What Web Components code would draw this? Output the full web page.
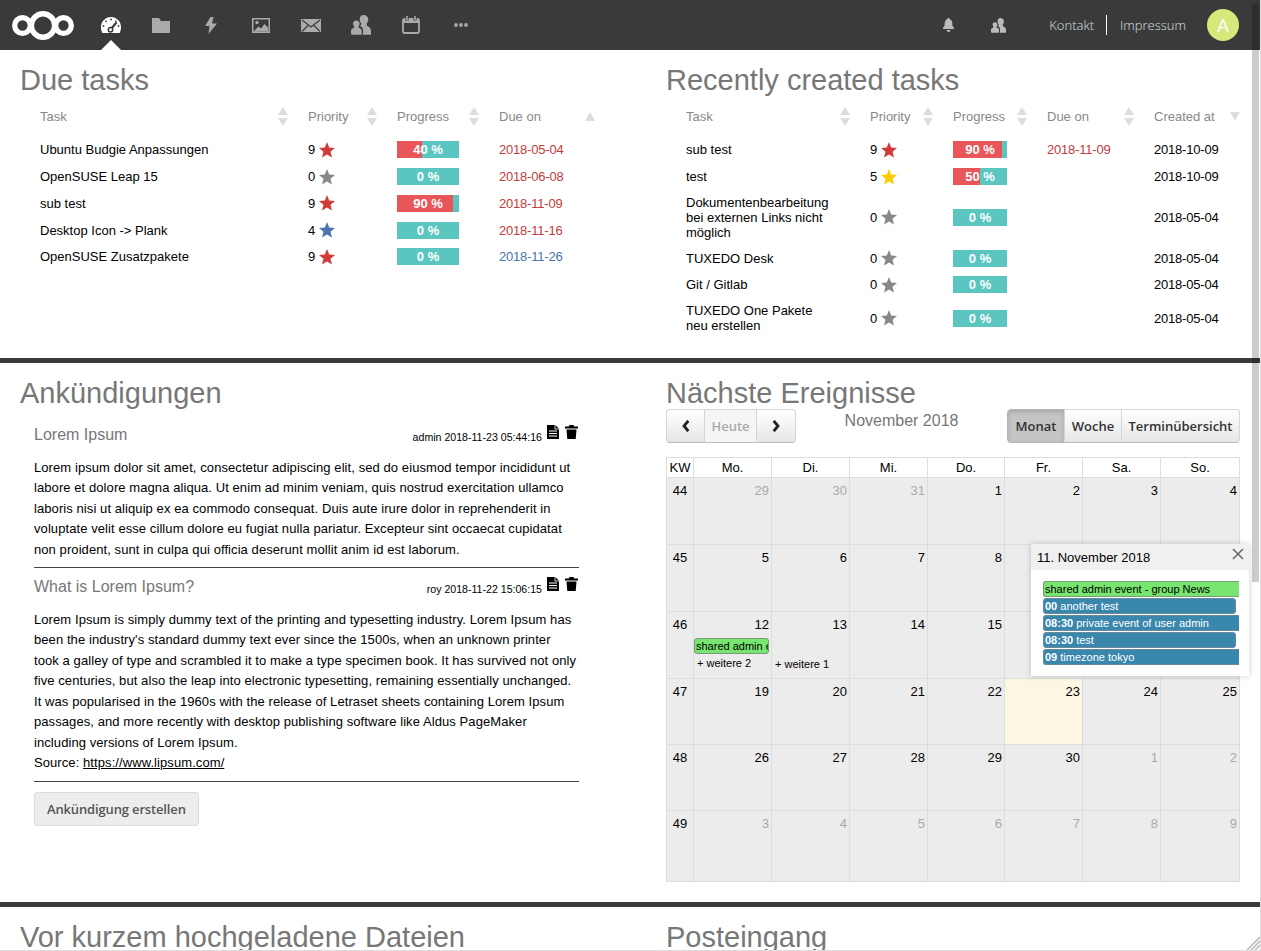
<!DOCTYPE html>
<html lang="de">
<head>
<meta charset="utf-8">
<title>Dashboard</title>
<style>
  html, body { margin: 0; height: 100%; overflow: hidden; background: #fff; }
  body { font: 13px/15px "Liberation Sans", Arial, sans-serif; color: #000; }
</style>
</head>
<body>
<app-shell>
  <nc-header></nc-header>

  <dash-row style="height:308px">
    <dash-panel heading="Due tasks">
      <task-table cols="288px 89px 102px 116px" sort="both,both,both,up" labels="Task,Priority,Progress,Due on">
        <task-row title-text="Ubuntu Budgie Anpassungen" prio="9" star="#d33a3a" done="40" due="2018-05-04" due-color="#c23b3b"></task-row>
        <task-row title-text="OpenSUSE Leap 15" prio="0" star="#888" done="0" due="2018-06-08" due-color="#c23b3b"></task-row>
        <task-row title-text="sub test" prio="9" star="#d33a3a" done="90" due="2018-11-09" due-color="#c23b3b"></task-row>
        <task-row title-text="Desktop Icon -&gt; Plank" prio="4" star="#4a76ad" done="0" due="2018-11-16" due-color="#c23b3b"></task-row>
        <task-row title-text="OpenSUSE Zusatzpakete" prio="9" star="#d33a3a" done="0" due="2018-11-26" due-color="#4a76ad"></task-row>
      </task-table>
    </dash-panel>
    <dash-panel heading="Recently created tasks">
      <task-table cols="204px 83px 94px 107px 106px" sort="both,both,both,both,down" labels="Task,Priority,Progress,Due on,Created at">
        <task-row title-text="sub test" prio="9" star="#d33a3a" done="90" due="2018-11-09" due-color="#c23b3b" created="2018-10-09"></task-row>
        <task-row title-text="test" prio="5" star="#fc0" done="50" due="" created="2018-10-09"></task-row>
        <task-row title-text="Dokumentenbearbeitung bei externen Links nicht möglich" prio="0" star="#888" done="0" due="" created="2018-05-04"></task-row>
        <task-row title-text="TUXEDO Desk" prio="0" star="#888" done="0" due="" created="2018-05-04"></task-row>
        <task-row title-text="Git / Gitlab" prio="0" star="#888" done="0" due="" created="2018-05-04"></task-row>
        <task-row title-text="TUXEDO One Pakete neu erstellen" prio="0" star="#888" done="0" due="" created="2018-05-04"></task-row>
      </task-table>
    </dash-panel>
  </dash-row>

  <dash-row style="height:539px">
    <dash-panel heading="Ankündigungen">
      <announce-list>
        <announce-item subject="Lorem Ipsum" meta="admin 2018-11-23 05:44:16">
          Lorem ipsum dolor sit amet, consectetur adipiscing elit, sed do eiusmod tempor incididunt ut labore et dolore magna aliqua. Ut enim ad minim veniam, quis nostrud exercitation ullamco laboris nisi ut aliquip ex ea commodo consequat. Duis aute irure dolor in reprehenderit in voluptate velit esse cillum dolore eu fugiat nulla pariatur. Excepteur sint occaecat cupidatat non proident, sunt in culpa qui officia deserunt mollit anim id est laborum.
        </announce-item>
        <announce-item subject="What is Lorem Ipsum?" meta="roy 2018-11-22 15:06:15">
          Lorem Ipsum is simply dummy text of the printing and typesetting industry. Lorem Ipsum has been the industry's standard dummy text ever since the 1500s, when an unknown printer took a galley of type and scrambled it to make a type specimen book. It has survived not only five centuries, but also the leap into electronic typesetting, remaining essentially unchanged. It was popularised in the 1960s with the release of Letraset sheets containing Lorem Ipsum passages, and more recently with desktop publishing software like Aldus PageMaker including versions of Lorem Ipsum.<br>
          Source: <a href="#" style="color:#000">https://www.lipsum.com/</a>
        </announce-item>
        <nc-button>Ankündigung erstellen</nc-button>
      </announce-list>
    </dash-panel>
    <dash-panel heading="Nächste Ereignisse">
      <month-calendar></month-calendar>
    </dash-panel>
  </dash-row>

  <dash-row style="height:44px" last>
    <dash-panel heading="Vor kurzem hochgeladene Dateien"></dash-panel>
    <dash-panel heading="Posteingang"></dash-panel>
  </dash-row>
</app-shell>

<script>
class AppShell extends HTMLElement {
  constructor() {
    super();
    this.attachShadow({ mode: 'open' });
    this.shadowRoot.innerHTML = `
      <style>
        :host { display: block; position: relative; width: 1261px; height: 951px; overflow: hidden;
          box-sizing: border-box; border-right: 1px solid #ddd; border-bottom: 1px solid #ddd; }
        .thumb { position: absolute; left: 1252px; top: 3px; width: 7px; height: 579px;
          background: rgba(0,0,0,.2); border-radius: 3px 3px 0 0; z-index: 50; }
        .grip { position: absolute; right: 0; bottom: 0; width: 14px; height: 14px; z-index: 50; }
      </style>
      <slot></slot>
      <div class="thumb"></div>
      <svg class="grip" viewBox="0 0 14 14"><path d="M1 14 14 1M5 14 14 5M9 14l5-5" stroke="#bbb" stroke-width="1.6" fill="none"/></svg>
    `;
  }
}

class NcHeader extends HTMLElement {
  constructor() {
    super();
    this.attachShadow({ mode: 'open' });
    const apps = [
      `<svg width="20" height="16" viewBox="0 0 20 16"><path fill="#fff" d="M10 0C4.4 0 0 4.4 0 10c0 2.200.5 4.200 1.300 6h17.400c.8-1.800 1.300-3.800 1.300-6C20 4.400 15.600 0 10 0z"/><g fill="#3a3a3a"><circle cx="10" cy="2.500" r=".9"/><circle cx="5" cy="4.300" r=".9"/><circle cx="2.500" cy="9" r=".9"/><circle cx="17.500" cy="9" r=".9"/><circle cx="15" cy="4.300" r=".9"/></g><path d="M10 12 15.500 5.500" stroke="#3a3a3a" stroke-width="2.200"/><circle cx="9.500" cy="12.800" r="2.200" fill="#fff" stroke="#3a3a3a" stroke-width="1.500"/></svg>`,
      `<svg width="18" height="15" viewBox="0 0 18 15"><path fill="#aaa" d="M0 0h7l2 3h9v12H0z"/></svg>`,
      `<svg width="12" height="17" viewBox="0 0 12 17"><path fill="#aaa" d="M5.500 0 0 9h4.500L3.500 17 12 6.500H7L8.500 0z"/></svg>`,
      `<svg width="18" height="15" viewBox="0 0 18 15"><path fill="#aaa" fill-rule="evenodd" d="M0 0h18v15H0zM1.500 1.500v12h15v-12z"/><circle cx="5" cy="4.500" r="1.700" fill="#aaa"/><path fill="#aaa" d="M2 13 6.500 8.500 9 10.500 12.500 6 16 9.500V13.500H2z"/></svg>`,
      `<svg width="20" height="13" viewBox="0 0 20 13"><rect width="20" height="13" fill="#aaa"/><path d="M1 1 10 8l9-7M1 12.500 7 6.500M19 12.500 13 6.500" fill="none" stroke="#3a3a3a" stroke-width="1.100"/></svg>`,
      this.usersIcon(20, 20),
      `<svg width="18" height="18" viewBox="0 0 18 18"><rect x="1" y="3" width="16" height="14" rx="1.500" fill="none" stroke="#aaa" stroke-width="1.800"/><path fill="#aaa" d="M1 3h16v4H1z"/><path d="M5 .5v4M13 .5v4" stroke="#3a3a3a" stroke-width="3.200"/><path d="M5 0v4M13 0v4" stroke="#aaa" stroke-width="1.600"/></svg>`,
      `<svg width="14" height="4" viewBox="0 0 14 4"><circle cx="2" cy="2" r="1.900" fill="#aaa"/><circle cx="7" cy="2" r="1.900" fill="#aaa"/><circle cx="12" cy="2" r="1.900" fill="#aaa"/></svg>`
    ];
    this.shadowRoot.innerHTML = `
      <style>
        :host { display: flex; align-items: center; height: 50px; background: #3a3a3a; position: relative; }
        .logo { margin-left: 12px; width: 62px; height: 29px; flex: none; display: block; }
        nav { display: flex; margin-left: 12px; }
        nav span { width: 50px; height: 50px; display: flex; align-items: center; justify-content: center; position: relative; }
        nav span.active::after { content: ""; position: absolute; left: 15px; bottom: 0;
          border-left: 10px solid transparent; border-right: 10px solid transparent; border-bottom: 10px solid #fff; }
        .right { margin-left: auto; display: flex; align-items: center; margin-right: 21px; }
        .tool { width: 50px; display: flex; justify-content: center; }
        .links { display: flex; align-items: center; font: 300 13px/20px "Open Sans", sans-serif; color: #d4e0e0; margin-left: 26px; }
        .links i { width: 1px; height: 20px; background: #fff; margin: 0 13px 0 12px; }
        .avatar { width: 32px; height: 32px; border-radius: 50%; background: #d7e77a; color: #fff;
          font: 400 19px/32px "Open Sans", sans-serif; text-align: center; margin-left: 21px; }
      </style>
      <svg class="logo" viewBox="0 0 62 29">
        <g fill="none" stroke="#fff">
          <circle cx="31" cy="14.500" r="11.700" stroke-width="5.500"/>
          <circle cx="10.500" cy="14.500" r="7.800" stroke-width="5.300"/>
          <circle cx="51.500" cy="14.500" r="7.800" stroke-width="5.300"/>
        </g>
      </svg>
      <nav>${apps.map((a, i) => `<span class="${i === 0 ? 'active' : ''}">${a}</span>`).join('')}</nav>
      <div class="right">
        <span class="tool"><svg width="11" height="14" viewBox="0 0 11 14"><path fill="#bbb" d="M5.500 0C4.700 0 4.200.6 4.200 1.300 2.500 1.900 1.700 3.400 1.700 5.300c0 2.500-.6 3.600-1.700 4.700v1h11v-1c-1.100-1.100-1.700-2.200-1.700-4.700 0-1.900-.8-3.400-2.500-4C6.800.6 6.300 0 5.500 0zM3.500 12c.2 1.100 1 2 2 2s1.800-.9 2-2z"/></svg></span>
        <span class="tool">${this.usersIcon(15, 15, '#bbb')}</span>
        <div class="links"><span>Kontakt</span><i></i><span>Impressum</span></div>
        <div class="avatar">A</div>
      </div>
    `;
  }
  usersIcon(w, h, color = '#aaa') {
    return `<svg width="${w}" height="${h}" viewBox="0 0 20 20"><path fill="${color}" d="M12.500 0c-2.300 0-3.800 1.900-3.800 4.300 0 1.800.7 3.300 1.700 4.300 0 1-.4 1.700-1.500 2.100 1.800.9 3.100 2.400 3.100 4.600V18c0 .7-.2 1.300-.5 1.800H20v-4c0-3.600-3.200-4.100-4.100-5.300-.3-.5-.4-1.100-.3-1.900 1-1 1.700-2.500 1.700-4.300C17.300 1.900 14.800 0 12.500 0z"/><path fill="${color}" d="M4.800 5.500C3.200 5.500 2.100 6.900 2.100 8.500c0 1.300.5 2.300 1.200 3 0 .7-.3 1.300-.8 1.600C1.300 13.800 0 14.300 0 16v2.200c0 .9.700 1.600 1.600 1.600h7.500c.9 0 1.600-.7 1.600-1.600V16c0-1.700-1.300-2.200-2.500-2.900-.5-.3-.8-.9-.8-1.600.7-.7 1.200-1.700 1.200-3 0-1.600-1.200-3-3.800-3z"/></svg>`;
  }
}

class DashRow extends HTMLElement {
  constructor() {
    super();
    this.attachShadow({ mode: 'open' });
    this.shadowRoot.innerHTML = `
      <style>
        :host { display: grid; grid-template-columns: 646px 605px; width: 1260px; box-sizing: content-box;
          border-bottom: 5px solid #3a3a3a; }
        :host([last]) { border-bottom: 0; overflow: hidden; }
      </style>
      <slot></slot>
    `;
  }
}

class DashPanel extends HTMLElement {
  constructor() {
    super();
    this.attachShadow({ mode: 'open' });
    this.shadowRoot.innerHTML = `
      <style>
        :host { display: block; padding: 15px 0 0 20px; min-width: 0; }
        h2 { margin: 0; font: 400 29px/30px "Liberation Sans", Arial, sans-serif; color: #777; white-space: nowrap; }
      </style>
      <h2></h2>
      <slot></slot>
    `;
    this.shadowRoot.querySelector('h2').textContent = this.getAttribute('heading');
  }
}

class TaskTable extends HTMLElement {
  constructor() {
    super();
    this.attachShadow({ mode: 'open' });
    this.shadowRoot.innerHTML = `
      <style>
        :host { display: block; --cols: ${this.getAttribute('cols')}; }
        .head { display: grid; grid-template-columns: var(--cols); height: 24px; margin: 9px 0 8.500px; align-items: center; color: #888; }
        .head > div { display: flex; justify-content: space-between; align-items: center; padding-right: 20px; }
        .head > div:first-child { padding-left: 20px; }
        svg { display: block; flex: none; }
      </style>
      <div class="head"></div>
      <slot></slot>
    `;
    const sort = this.getAttribute('sort').split(',');
    const head = this.shadowRoot.querySelector('.head');
    head.innerHTML = this.getAttribute('labels').split(',').map((label, i) => `
      <div><span>${label}</span>${this.sortIcon(sort[i])}</div>`).join('');
  }
  sortIcon(dir) {
    const shapes = {
      both: '<path d="M5 0 10 8H0z"/><path d="M5 19 10 11H0z"/>',
      up: '<path d="M5 5 10 14H0z"/>',
      down: '<path d="M5 14 10 5H0z"/>'
    };
    return `<svg width="10" height="19" viewBox="0 0 10 19" fill="#ddd">${shapes[dir]}</svg>`;
  }
}

class TaskRow extends HTMLElement {
  constructor() {
    super();
    this.attachShadow({ mode: 'open' });
    const done = Number(this.getAttribute('done'));
    const created = this.getAttribute('created');
    this.shadowRoot.innerHTML = `
      <style>
        :host { display: grid; grid-template-columns: var(--cols); align-items: center; }
        .cell { padding: 4.875px 0; }
        .name { padding-left: 20px; padding-right: 38px; }
        .date { letter-spacing: -.2px; }
        .prio { display: flex; align-items: center; gap: 4px; }
        .prio svg { display: block; }
        .bar { position: relative; width: calc(100% - 40px); height: 17px; background: #5bc6c0; overflow: hidden; }
        .bar b { position: absolute; left: 0; top: 0; bottom: 0; background: #e9565a; }
        .bar span { position: relative; display: block; text-align: center; color: #fff; font: 700 13px/17px "Liberation Sans", Arial, sans-serif; }
      </style>
      <div class="cell name"></div>
      <div class="cell prio"><span>${this.getAttribute('prio')}</span>
        <svg width="16" height="16" viewBox="0 0 16 16"><path fill="${this.getAttribute('star')}" d="M8 0 10.200 5.500 16 6 11.500 9.700 13 15.500 8 12.400 3 15.500 4.500 9.700 0 6 5.800 5.500z"/></svg>
      </div>
      <div class="cell"><div class="bar"><b style="width:${done}%"></b><span>${done} %</span></div></div>
      <div class="cell date" style="color:${this.getAttribute('due-color') || '#000'}">${this.getAttribute('due')}</div>
      ${created ? `<div class="cell date">${created}</div>` : ''}
    `;
    this.shadowRoot.querySelector('.name').textContent = this.getAttribute('title-text');
  }
}

class AnnounceList extends HTMLElement {
  constructor() {
    super();
    this.attachShadow({ mode: 'open' });
    this.shadowRoot.innerHTML = `
      <style>:host { display: block; width: 545px; margin: 17px 0 0 14px; }</style>
      <slot></slot>
    `;
  }
}

class AnnounceItem extends HTMLElement {
  constructor() {
    super();
    this.attachShadow({ mode: 'open' });
    this.shadowRoot.innerHTML = `
      <style>
        :host { display: block; }
        header { display: flex; align-items: center; height: 20px; margin-bottom: 12.750px; }
        h3 { margin: 0; flex: 1; font: 400 16px/20px "Liberation Sans", Arial, sans-serif; color: #777; }
        small { font-size: 10.600px; line-height: 14px; margin-top: 4px; color: #000; }
        .acts { display: flex; gap: 6px; margin: -6px 1px 0 5px; }
        svg { display: block; }
        .text { line-height: 20.500px; letter-spacing: .08px; }
        hr { border: 0; height: 1px; background: #444; margin: 6.750px 0 9px; }
      </style>
      <header>
        <h3>${this.getAttribute('subject')}</h3>
        <small>${this.getAttribute('meta')}</small>
        <span class="acts">
          <svg width="12" height="14" viewBox="0 0 12 14"><path d="M0 0h8l4 4v10H0z"/><path d="M8 0v4h4" fill="#000" stroke="#fff" stroke-width=".8"/><path d="M2 6h8M2 8.500h8M2 11h8" stroke="#fff" stroke-width="1.200"/></svg>
          <svg width="13" height="14" viewBox="0 0 13 14"><path d="M4.500 0h4l.7 1.500H13v2H0v-2h3.800zM1.500 4.500h10l-.8 9.500H2.300z"/></svg>
        </span>
      </header>
      <div class="text"><slot></slot></div>
      <hr>
    `;
  }
}

class NcButton extends HTMLElement {
  constructor() {
    super();
    this.attachShadow({ mode: 'open' });
    this.shadowRoot.innerHTML = `
      <style>
        :host { display: inline-block; margin-top: 1px; box-sizing: border-box; height: 34px; padding: 0 12px;
          background: #ededed; border: 1px solid #dbdbdb; border-radius: 3px; color: #555;
          font: 600 13px/32px "Open Sans", sans-serif; letter-spacing: -.15px; }
      </style>
      <slot></slot>
    `;
  }
}

class CalEvent extends HTMLElement {
  constructor() {
    super();
    this.attachShadow({ mode: 'open' });
    this.shadowRoot.innerHTML = `
      <style>
        :host { display: block; box-sizing: border-box; height: 16px; font-size: 11px; line-height: 14px;
          white-space: nowrap; overflow: hidden; padding-left: 1px; background: #3a87ad; color: #fff;
          border: 1px solid #6a8a9a; border-right-width: 0; border-radius: 3px 0 0 3px; }
        :host([closed]) { border-right-width: 1px; border-radius: 3px; }
        :host([green]) { background: #77e570; color: #000; border-color: #7a9a78; }
        b { font-weight: 700; }
      </style>
      <b></b><slot></slot>
    `;
    this.shadowRoot.querySelector('b').textContent = this.getAttribute('time') || '';
  }
}

class MonthCalendar extends HTMLElement {
  constructor() {
    super();
    this.attachShadow({ mode: 'open' });
    const weeks = [
      [44, ['29', '30', '31', 1, 2, 3, 4]],
      [45, [5, 6, 7, 8, 9, 10, 11]],
      [46, [12, 13, 14, 15, 16, 17, 18]],
      [47, [19, 20, 21, 22, 23, 24, 25]],
      [48, [26, 27, 28, 29, 30, '1', '2']],
      [49, ['3', '4', '5', '6', '7', '8', '9']]
    ];
    const heights = [67, 67, 67, 66, 66, 71];
    const dayCell = (d) => {
      const muted = typeof d === 'string';
      let extra = '';
      if (d === 12) {
        extra = `<cal-event green closed class="ev12">shared admin event - group News</cal-event><div class="more">+ weitere 2</div>`;
      }
      if (d === 13) {
        extra = `<div class="spacer"></div><div class="more">+ weitere 1</div>`;
      }
      return `<div class="cell ${d === 23 ? 'today' : ''}"><div class="num ${muted ? 'muted' : ''}">${d}</div>${extra}</div>`;
    };
    this.shadowRoot.innerHTML = `
      <style>
        :host { display: block; width: 574px; position: relative; margin-top: 1px; }
        .bar { display: flex; justify-content: space-between; height: 34px; margin-bottom: 14px; }
        .group { display: flex; }
        .btn { box-sizing: border-box; height: 34px; display: flex; align-items: center; justify-content: center;
          font: 600 13px "Open Sans", sans-serif; color: #333; border: 1px solid #d5d5d5; border-bottom-color: #bbb;
          margin-left: -1px; background: linear-gradient(#fff, #e6e6e6); }
        .group .btn:first-child { border-radius: 4px 0 0 4px; margin-left: 0; }
        .group .btn:last-child { border-radius: 0 4px 4px 0; }
        .btn.off { color: #aaa; background: #f5f5f5; font-weight: 600; }
        .btn.on { background: #c4c4c4; box-shadow: inset 0 2px 4px rgba(0,0,0,.15); border-color: #b5b5b5; }
        .month { font-size: 16px; line-height: 22px; color: #777; padding-top: 1px; }
        .grid { display: grid; grid-template-columns: 27px 78px 78px 78px 77px 78px 78px 79px;
          grid-template-rows: 20px ${heights.map(h => h + 'px').join(' ')};
          border-top: 1px solid #ddd; border-left: 1px solid #ddd; width: 574px; box-sizing: border-box; }
        .grid > div { box-sizing: border-box; border-right: 1px solid #ddd; border-bottom: 1px solid #ddd; min-width: 0; }
        .th { text-align: center; line-height: 19px; }
        .kw { background: #ececec; text-align: center; padding-top: 5px; }
        .cell { background: #ececec; padding-top: 5px; }
        .cell.today { background: #fdf6e3; }
        .num { text-align: right; padding-right: 2px; height: 15px; }
        .muted { color: #aaa; }
        .ev12 { width: 75px; margin: 6px 0 0 0; }
        .spacer { height: 17px; margin-top: 6px; }
        .more { font-size: 11px; line-height: 14px; margin: 2px 0 0 3px; white-space: nowrap; }
        .pop { position: absolute; left: 365px; top: 135px; width: 218px; height: 132px; background: #fff;
          box-shadow: 0 0 6px rgba(0,0,0,.2); z-index: 5; }
        .pop header { box-sizing: border-box; height: 26px; padding-top: 1px; background: #f0f0f0; line-height: 26px; padding-left: 6px; position: relative; }
        .pop header svg { position: absolute; right: 5px; top: 4px; }
        .pop .list { margin: 11px 10px 0 12px; display: flex; flex-direction: column; gap: 1px; }
        .pop .short { margin-right: 3px; }
      </style>
      <div class="bar">
        <div class="group">
          <div class="btn" style="width:39px"><svg width="8" height="12" viewBox="0 0 8 12"><path d="M6.300 .8 2 6l4.300 5.200" fill="none" stroke="#222" stroke-width="2.800"/></svg></div>
          <div class="btn off" style="width:53px">Heute</div>
          <div class="btn" style="width:40px"><svg width="8" height="12" viewBox="0 0 8 12"><path d="M1.700 .8 6 6l-4.300 5.200" fill="none" stroke="#222" stroke-width="2.800"/></svg></div>
        </div>
        <div class="month">November 2018</div>
        <div class="group">
          <div class="btn on" style="width:58px">Monat</div>
          <div class="btn" style="width:58px">Woche</div>
          <div class="btn" style="width:119px">Terminübersicht</div>
        </div>
      </div>
      <div class="grid">
        ${['KW', 'Mo.', 'Di.', 'Mi.', 'Do.', 'Fr.', 'Sa.', 'So.'].map(t => `<div class="th">${t}</div>`).join('')}
        ${weeks.map(([kw, days]) => `<div class="kw">${kw}</div>${days.map(dayCell).join('')}`).join('')}
      </div>
      <div class="pop">
        <header>11. November 2018
          <svg width="12" height="12" viewBox="0 0 12 12"><path d="M1 1l10 10M11 1 1 11" stroke="#666" stroke-width="1.500"/></svg>
        </header>
        <div class="list">
          <cal-event green>shared admin event - group News</cal-event>
          <cal-event closed class="short" time="00">&nbsp;another test</cal-event>
          <cal-event time="08:30">&nbsp;private event of user admin</cal-event>
          <cal-event closed class="short" time="08:30">&nbsp;test</cal-event>
          <cal-event time="09">&nbsp;timezone tokyo</cal-event>
        </div>
      </div>
    `;
  }
}

customElements.define('app-shell', AppShell);
customElements.define('nc-header', NcHeader);
customElements.define('dash-row', DashRow);
customElements.define('dash-panel', DashPanel);
customElements.define('task-table', TaskTable);
customElements.define('task-row', TaskRow);
customElements.define('announce-list', AnnounceList);
customElements.define('announce-item', AnnounceItem);
customElements.define('nc-button', NcButton);
customElements.define('cal-event', CalEvent);
customElements.define('month-calendar', MonthCalendar);
</script>
</body>
</html>
